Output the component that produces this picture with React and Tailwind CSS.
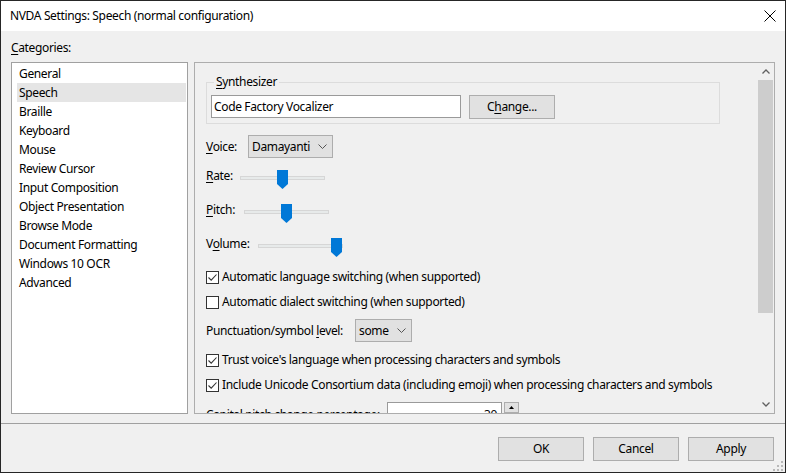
import React from 'react';

const CATEGORIES = [
  'General', 'Speech', 'Braille', 'Keyboard', 'Mouse', 'Review Cursor', 'Input Composition',
  'Object Presentation', 'Browse Mode', 'Document Formatting', 'Windows 10 OCR', 'Advanced',
];

function Check({ checked }) {
  return (
    <span className="w-[13px] h-[13px] border border-[#333] bg-white flex items-center justify-center shrink-0">
      {checked && (
        <svg width="11" height="11" viewBox="0 0 11 11">
          <path d="M1.5 5.5 L4.2 8.2 L9.5 2.5" fill="none" stroke="#333" strokeWidth="1.1" />
        </svg>
      )}
    </span>
  );
}

function CheckRow({ checked, children }) {
  return (
    <div className="flex items-center h-[16px] gap-[3px]">
      <Check checked={checked} />
      <span className="leading-[16px] whitespace-nowrap">{children}</span>
    </div>
  );
}

function Chevron({ up }) {
  return (
    <svg width="8" height="5" viewBox="0 0 8 5">
      <path d={up ? 'M0.5 4.5 L4 1 L7.5 4.5' : 'M0.5 0.5 L4 4 L7.5 0.5'} fill="none" stroke="#606060" strokeWidth="1.3" />
    </svg>
  );
}

function Combo({ value, className }) {
  return (
    <div className={`h-[23px] bg-[#e1e1e1] border border-[#adadad] flex items-center justify-between pl-[3px] pr-[5px] ${className}`}>
      <span className="leading-[16px]">{value}</span>
      <svg width="9" height="5" viewBox="0 0 9 5">
        <path d="M0.5 0.5 L4.5 4.5 L8.5 0.5" fill="none" stroke="#555" strokeWidth="1" />
      </svg>
    </div>
  );
}

function Slider({ thumbClass }) {
  return (
    <div className="relative w-[85px] h-[19px]">
      <div className="absolute left-0 right-0 top-[6px] h-[4px] bg-[#e7eaea] border border-[#d6d6d6]" />
      <svg className={`absolute top-0 ${thumbClass}`} width="11" height="19" viewBox="0 0 11 19">
        <path d="M0 0 H11 V14 L5.5 19 L0 14 Z" fill="#0078d7" />
      </svg>
    </div>
  );
}

function Button({ children }) {
  return (
    <button className="w-[86px] h-[24px] bg-[#e1e1e1] border border-[#adadad] leading-[16px]">
      {children}
    </button>
  );
}

export default function App() {
  return (
    <div className="w-[786px] h-[473px] border border-[#262626] bg-[#f0f0f0] flex flex-col text-[12px] tracking-[-0.35px] text-black font-['Noto_Sans',sans-serif] overflow-hidden">
      {/* Title bar */}
      <div className="h-[30px] bg-white flex items-center justify-between pl-[9px] pr-[9px] shrink-0">
        <span className="leading-[16px]">NVDA Settings: Speech (normal configuration)</span>
        <svg width="12" height="12" viewBox="0 0 12 12">
          <path d="M0.5 0.5 L11.5 11.5 M11.5 0.5 L0.5 11.5" stroke="#000" strokeWidth="1" />
        </svg>
      </div>

      {/* Body */}
      <div className="px-[10px] pt-[9px] shrink-0">
        <div className="leading-[16px]"><u className="underline-offset-[2px]">C</u>ategories:</div>
        <div className="mt-[6px] flex gap-[6px] h-[352px]">
          {/* Category list */}
          <div className="w-[177px] bg-white border border-[#a0a0a0] pt-[1px] pl-[5px] pr-[1px]">
            {CATEGORIES.map(c => (
              <div
                key={c}
                className={`h-[19px] leading-[19px] pl-[2px] ${c === 'Speech' ? 'bg-[#e5e5e5]' : ''}`}
              >
                {c}
              </div>
            ))}
          </div>

          {/* Settings panel */}
          <div className="flex-1 border border-[#adadad] flex">
            <div className="flex-1 overflow-hidden pl-[11px] pt-[19px]">
              {/* Synthesizer group */}
              <div className="relative w-[514px] h-[42px] border border-[#dcdcdc] pt-[12px] pl-[4px] flex gap-[8px]">
                <span className="absolute -top-[9px] left-[7px] px-[2px] bg-[#f0f0f0] leading-[16px]">
                  <u className="underline-offset-[2px]">S</u>ynthesizer
                </span>
                <div className="w-[250px] h-[23px] bg-white border border-[#9a9a9a] pl-[2px] leading-[21px]">
                  Code Factory Vocalizer
                </div>
                <Button>C<u className="underline-offset-[2px]">h</u>ange...</Button>
              </div>

              {/* Voice */}
              <div className="mt-[11px] flex items-center">
                <span className="w-[42px] leading-[16px]"><u className="underline-offset-[2px]">V</u>oice:</span>
                <Combo value="Damayanti" className="w-[85px]" />
              </div>

              {/* Rate */}
              <div className="mt-[12px] flex items-start">
                <span className="w-[34px] leading-[15px] -mt-[2px]"><u className="underline-offset-[2px]">R</u>ate:</span>
                <Slider thumbClass="left-[37px]" />
              </div>

              {/* Pitch */}
              <div className="mt-[15px] flex items-start">
                <span className="w-[38px] leading-[15px] -mt-[2px]"><u className="underline-offset-[2px]">P</u>itch:</span>
                <Slider thumbClass="left-[37px]" />
              </div>

              {/* Volume */}
              <div className="mt-[15px] flex items-start">
                <span className="w-[52px] leading-[15px] -mt-[2px]">V<u className="underline-offset-[2px]">o</u>lume:</span>
                <Slider thumbClass="left-[73px]" />
              </div>

              <div className="mt-[12px]">
                <CheckRow checked>Automatic language switching (when supported)</CheckRow>
              </div>
              <div className="mt-[9px]">
                <CheckRow>Automatic dialect switching (when supported)</CheckRow>
              </div>

              {/* Punctuation */}
              <div className="mt-[9px] flex items-center">
                <span className="w-[149px] leading-[16px]">Punctuation/symbol <u className="underline-offset-[2px]">l</u>evel:</span>
                <Combo value="some" className="w-[57px]" />
              </div>

              <div className="mt-[10px]">
                <CheckRow checked>Trust voice's language when processing characters and symbols</CheckRow>
              </div>
              <div className="mt-[9px]">
                <CheckRow checked>Include Unicode Consortium data (including emoji) when processing characters and symbols</CheckRow>
              </div>

              {/* Capital pitch (clipped by the scroll area) */}
              <div className="mt-[9px] flex items-start">
                <span className="w-[181px] mt-[5px] leading-[16px] whitespace-nowrap">Capital pitch change percentage:</span>
                <div className="w-[115px] h-[23px] bg-white border border-[#9a9a9a] text-right pr-[4px] pt-[4px] leading-[16px]">30</div>
                <div className="ml-[2px] w-[15px] h-[23px] flex flex-col">
                  <div className="h-[11px] border border-[#adadad] bg-[#e1e1e1] flex items-center justify-center">
                    <svg width="5" height="3" viewBox="0 0 5 3"><path d="M0 3 L2.5 0 L5 3 Z" fill="#000" /></svg>
                  </div>
                </div>
              </div>
            </div>

            {/* Scrollbar */}
            <div className="w-[17px] flex flex-col bg-[#f0f0f0]">
              <div className="h-[17px] flex items-center justify-center"><Chevron up /></div>
              <div className="h-[233px] mx-[1px] bg-[#cdcdcd]" />
              <div className="flex-1" />
              <div className="h-[17px] flex items-center justify-center"><Chevron /></div>
            </div>
          </div>
        </div>
      </div>

      {/* Separator + buttons */}
      <div className="mt-[9px] border-t border-[#a0a0a0] flex-1 relative">
        <div className="pt-[13px] pr-[11px] flex justify-end gap-[9px]">
          <Button>OK</Button>
          <Button>Cancel</Button>
          <Button>Apply</Button>
        </div>
        <svg className="absolute right-[2px] bottom-[1px]" width="10" height="10" viewBox="0 0 10 10">
          <g fill="#b8b8b8">
            <rect x="8" y="0" width="2" height="2" />
            <rect x="4" y="4" width="2" height="2" />
            <rect x="8" y="4" width="2" height="2" />
            <rect x="0" y="8" width="2" height="2" />
            <rect x="4" y="8" width="2" height="2" />
            <rect x="8" y="8" width="2" height="2" />
          </g>
        </svg>
      </div>
    </div>
  );
}
